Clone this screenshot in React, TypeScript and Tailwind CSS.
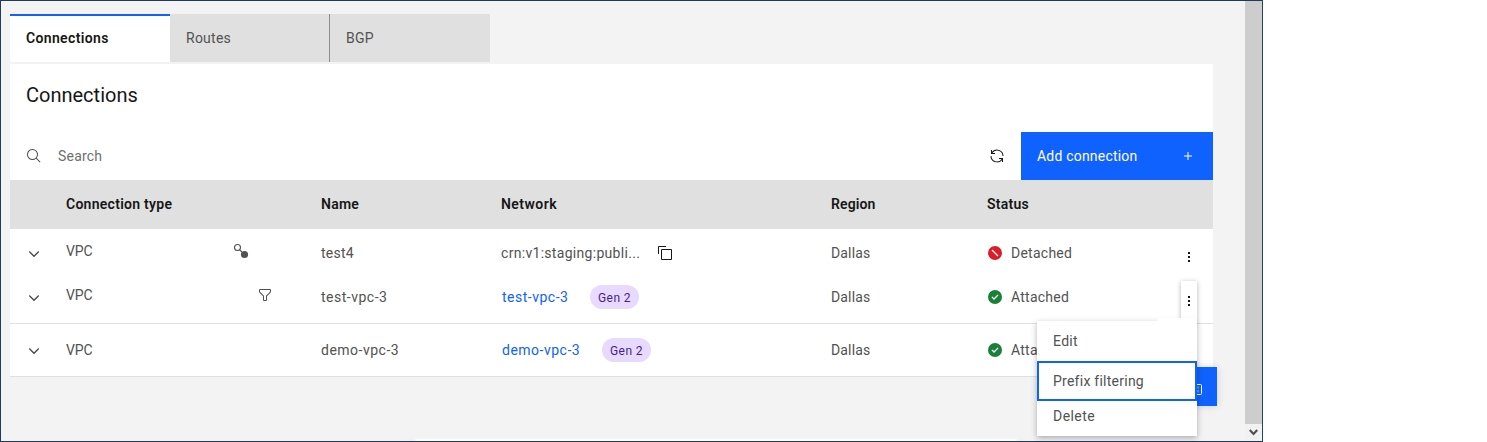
import React from "react";

type IconProps = { className?: string };

const Chevron = () => (
  <svg className="size-4 fill-[#393939]" viewBox="0 0 16 16"><path d="M8 11L3 6l.7-.7L8 9.6l4.3-4.3.7.7z" stroke="#393939" strokeWidth=".3" /></svg>
);
const SearchIcon = () => (
  <svg className="size-4 fill-[#525252]" viewBox="0 0 32 32"><path d="M29,27.5859l-7.5521-7.5521a11.0177,11.0177,0,1,0-1.4141,1.4141L27.5859,29ZM4,13a9,9,0,1,1,9,9A9.01,9.01,0,0,1,4,13Z" /></svg>
);
const Renew = () => (
  <svg className="size-4 fill-[#161616]" viewBox="0 0 32 32">
    <path d="M12,10H6.78A11,11,0,0,1,27,16h2A13,13,0,0,0,6,7.68V4H4v8h8Z" />
    <path d="M20,22h5.22A11,11,0,0,1,5,16H3a13,13,0,0,0,23,8.32V28h2V20H20Z" />
  </svg>
);
const Plus = () => (
  <svg className="size-4 fill-white" viewBox="0 0 32 32"><path d="M17 15V8h-2v7H8v2h7v7h2v-7h7v-2z" /></svg>
);
const Copy = () => (
  <svg className="size-4 fill-[#161616]" viewBox="0 0 32 32">
    <path d="M28,10V28H10V10H28m0-2H10a2,2,0,0,0-2,2V28a2,2,0,0,0,2,2H28a2,2,0,0,0,2-2V10a2,2,0,0,0-2-2Z" />
    <path d="M4,18H2V4A2,2,0,0,1,4,2H18V4H4Z" />
  </svg>
);
const Filter = () => (
  <svg className="size-4 fill-[#525252]" viewBox="0 0 32 32"><path d="M18,28H14a2,2,0,0,1-2-2V18.41L4.59,11A2,2,0,0,1,4,9.59V6A2,2,0,0,1,6,4H26a2,2,0,0,1,2,2V9.59A2,2,0,0,1,27.41,11L20,18.41V26A2,2,0,0,1,18,28ZM6,6V9.59l8,8V26h4V17.59l8-8V6Z" /></svg>
);
const Link = () => (
  <svg className="size-4" viewBox="0 0 16 16">
    <circle cx="4.5" cy="4.500" r="3" fill="none" stroke="#525252" strokeWidth="1.1" />
    <path d="M6.6 6.800L9 9" stroke="#525252" strokeWidth="1.1" />
    <circle cx="11.500" cy="11.500" r="3.600" fill="#525252" />
  </svg>
);
const Dots = () => (
  <svg className="size-4 fill-[#161616]" viewBox="0 0 16 16">
    <rect x="7" y="3" width="2" height="2" /><rect x="7" y="7" width="2" height="2" /><rect x="7" y="11" width="2" height="2" />
  </svg>
);
const Attached = () => (
  <svg className="size-4" viewBox="0 0 16 16">
    <circle cx="8" cy="8" r="7" fill="#198038" />
    <path d="M4.900 7.900L7 10l4.100-4.100" fill="none" stroke="#fff" strokeWidth="1.300" />
  </svg>
);
const Detached = () => (
  <svg className="size-4" viewBox="0 0 16 16">
    <circle cx="8" cy="8" r="7" fill="#da1e28" />
    <path d="M5 5l6 6" stroke="#fff" strokeWidth="1.3" />
  </svg>
);
const Calendar = ({ className }: IconProps) => (
  <svg className={className} viewBox="0 0 16 16">
    <rect x="2.5" y="3.5" width="11" height="10" rx="1" fill="none" stroke="#fff" />
    <path d="M10 5.500v2M10 9v2.500" stroke="#fff" strokeOpacity=".7" />
  </svg>
);

const cols = "grid grid-cols-[56px_255px_180px_330px_156px_1fr]";

type RowProps = {
  height: string;
  shift?: string;
  name: React.ReactNode;
  network: React.ReactNode;
  marker?: React.ReactNode;
  status: React.ReactNode;
  action?: React.ReactNode;
};

function Row({ height, shift = "", name, network, marker, status, action }: RowProps) {
  return (
    <div className={`${cols} items-center bg-white ${height}`}>
      <div className="pt-0.5 pl-4"><Chevron /></div>
      <div className={`flex items-center ${shift}`}>
        <span className="w-[167px] tracking-[-0.1px]">VPC</span>
        {marker}
      </div>
      <div>{name}</div>
      <div className="flex items-center">{network}</div>
      <div className="tracking-[0.15px]">Dallas</div>
      <div className="flex items-center">
        {status}
        <div className="ml-auto mr-4 pt-2">{action}</div>
      </div>
    </div>
  );
}

const Tag = () => (
  <span className="flex h-6 w-[49px] items-center justify-center rounded-full bg-[#e8daff] pt-0.5 text-xs tracking-[0.4px] text-[#491d8b]">Gen 2</span>
);

export default function App() {
  return (
    <div className="h-[442px] w-full overflow-hidden bg-white font-[Roboto,sans-serif] text-sm leading-[18px] text-[#525252]">
      <div className="relative flex h-full w-[1263px] border border-[#1f3864] border-r-[#1d4a50] bg-[#f3f3f3]">
        <main className="ml-[9px] w-[1203px] pt-[13px]">
          <nav className="flex h-12 w-[480px] bg-[#e0e0e0]">
            <div className="flex w-40 items-center border-t-2 border-[#0f62fe] bg-white pb-[3px] pl-4 font-semibold text-[#161616]"><span className="tracking-[0.35px]">Connections</span></div>
            <div className="flex w-40 items-center border-r border-[#8d8d8d] pl-4"><span className="tracking-[0.25px]">Routes</span></div>
            <div className="flex w-40 items-center pl-4"><span className="tracking-[0.2px]">BGP</span></div>
          </nav>
          <section className="mt-0.5 bg-white">
            <h1 className="flex h-[68px] items-center pb-1.5 pl-4 text-xl text-[#161616]"><span>Connections</span></h1>
            <div className="flex h-12 items-center">
              <div className="flex flex-1 items-center gap-4 pl-4 text-[#6f6f6f]"><SearchIcon /><span className="tracking-[0.2px]">Search</span></div>
              <div className="mr-4"><Renew /></div>
              <button className="flex h-12 w-48 items-center justify-between bg-[#0f62fe] px-4 text-white"><span className="tracking-[0.2px]">Add connection</span><span className="mr-px"><Plus /></span></button>
            </div>
            <div className={`${cols} h-[49px] items-center bg-[#e0e0e0] pb-0.5 font-semibold text-[#161616]`}>
              <span />
              <span className="tracking-[0.27px]">Connection type</span>
              <span className="tracking-[0.25px]">Name</span>
              <span className="tracking-[0.45px]">Network</span>
              <span className="tracking-[0.1px]">Region</span>
              <span className="tracking-[0.25px]">Status</span>
            </div>
            <Row
              height="h-12"
              shift="pb-1"
              marker={<Link />}
              name={<span className="tracking-[0.25px]">test4</span>}
              network={<><span className="w-[156px] tracking-[0.3px]">crn:v1:staging:publi...</span><Copy /></>}
              status={<><Detached /><span className="ml-2 tracking-[0.25px]">Detached</span></>}
              action={<Dots />}
            />
            <Row
              height="h-[47px] border-b border-[#e0e0e0] pb-1.5"
              shift="pb-1"
              marker={<div className="ml-6"><Filter /></div>}
              name={<span className="tracking-[0.5px]">test-vpc-3</span>}
              network={<><a className="w-[88px] pl-px tracking-[0.5px] text-[#0f62fe]">test-vpc-3</a><span className="ml-px"><Tag /></span></>}
              status={<><Attached /><span className="ml-2 tracking-[0.25px]">Attached</span></>}
            />
            <Row
              height="h-[53px] border-b border-[#e0e0e0]"
              name={<span className="tracking-[0.5px]">demo-vpc-3</span>}
              network={<><a className="w-[100px] pl-px tracking-[0.5px] text-[#0f62fe]">demo-vpc-3</a><span className="ml-px"><Tag /></span></>}
              status={<><Attached /><span className="ml-2 tracking-[0.25px]">Attached</span></>}
            />
          </section>
        </main>
        <aside className="ml-auto flex w-[17px] flex-col bg-[#cdcdcd]">
          <div className="mt-auto flex h-[17px] items-center justify-center bg-[#f1f1f1]">
            <svg className="size-[9px]" viewBox="0 0 9 9"><path d="M.8 2l3.700 4L8.200 2" fill="none" stroke="#505050" strokeWidth="2.200" /></svg>
          </div>
        </aside>
        <div className="absolute top-[438px] left-[414px] h-0.5 w-[602px] bg-white" />
        <div className="absolute top-[366px] left-[1176px] flex h-[39px] w-10 items-center bg-[#0f62fe] pl-[11px] shadow-[0_0_8px_rgba(0,0,0,0.15)]"><Calendar className="mt-1 size-4" /></div>
        <div className="absolute top-[280px] left-[1180px] flex h-[42px] w-4 items-start bg-white pt-3 shadow-[0_1px_5px_rgba(0,0,0,0.3)]"><Dots /></div>
        <div className="absolute top-[320px] left-[1036px] w-40 bg-white shadow-[0_2px_6px_rgba(0,0,0,0.3)]">
          <div className="flex h-10 items-center pl-4"><span className="tracking-[0.3px]">Edit</span></div>
          <div className="flex h-10 items-center border-2 border-[#0f62fe] pl-3.5"><span className="tracking-[0.25px]">Prefix filtering</span></div>
          <div className="flex h-[35px] items-center pb-[5px] pl-4"><span className="tracking-[0.45px]">Delete</span></div>
        </div>
        <div className="absolute top-[317px] left-[1156px] h-3 w-10 bg-white" />
      </div>
    </div>
  );
}
